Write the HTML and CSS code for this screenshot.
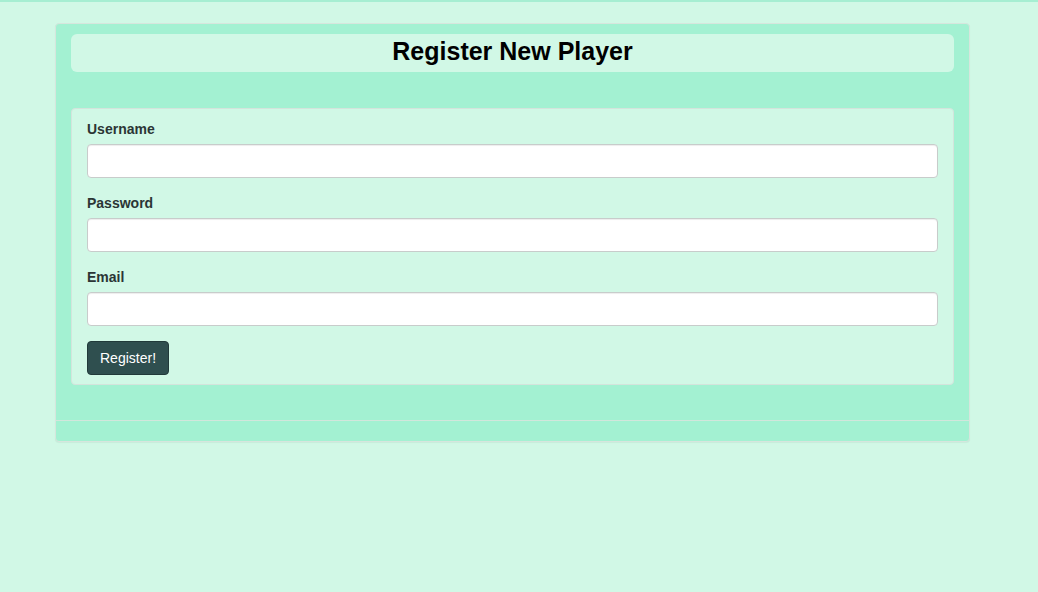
FILE: index.html
```html
<!DOCTYPE html>
<html>
<head>
<meta charset="utf-8">
<title>Register New Player</title>
<link rel="stylesheet" href="styles.css">
</head>
<body>
<div class="panel">
  <div class="panel-heading">
    <h1 class="title">Register New Player</h1>
  </div>
  <div class="panel-body">
    <form class="well">
      <div class="form-group">
        <label for="username">Username</label>
        <input id="username" type="text" class="form-control">
      </div>
      <div class="form-group">
        <label for="password">Password</label>
        <input id="password" type="password" class="form-control">
      </div>
      <div class="form-group">
        <label for="email">Email</label>
        <input id="email" type="email" class="form-control">
      </div>
      <button type="button" class="btn">Register!</button>
    </form>
  </div>
  <div class="panel-footer"></div>
</div>
</body>
</html>
```

FILE: styles.css
```css
html, body {
  margin: 0;
  padding: 0;
}
body {
  background: #d1f8e6;
  border-top: 2px solid #a6eed2;
  font-family: "Liberation Sans", Arial, Helvetica, sans-serif;
  font-size: 14px;
  line-height: 20px;
  color: #333;
  min-height: 590px;
}
.panel {
  box-sizing: border-box;
  width: 915px;
  margin: 21px 0 0 55px;
  background: #a3f1d2;
  border: 1px solid #d6e6dd;
  border-radius: 4px;
  box-shadow: 0 1px 1px rgba(0, 0, 0, 0.05);
}
.panel-heading {
  padding: 10px 15px 0;
}
.title {
  margin: 0;
  height: 38px;
  box-sizing: border-box;
  padding: 0 0 4px;
  background: #d1f8e6;
  border-radius: 6px;
  font-size: 25px;
  line-height: 34px;
  font-weight: bold;
  color: #000;
  text-align: center;
}
.panel-body {
  padding: 36px 15px 35px;
}
.well {
  margin: 0;
  padding: 10px 15px 9px;
  background: #d1f8e6;
  border: 1px solid #d4e4dc;
  border-radius: 4px;
}
.form-group {
  margin-bottom: 15px;
}
label {
  display: block;
  margin-bottom: 5px;
  font-weight: bold;
  color: #2b3535;
}
.form-control {
  display: block;
  box-sizing: border-box;
  width: 100%;
  height: 34px;
  margin: 0;
  padding: 6px 12px;
  background: #fff;
  border: 1px solid #c8cccb;
  border-radius: 4px;
  font: inherit;
  box-shadow: inset 0 1px 1px rgba(0, 0, 0, 0.075);
}
.btn {
  display: block;
  box-sizing: border-box;
  height: 34px;
  padding: 6px 12px;
  margin: 0;
  background: #2f4f4f;
  border: 1px solid #213a3a;
  border-radius: 4px;
  color: #fff;
  font: inherit;
  font-size: 14px;
  line-height: 20px;
}
.panel-footer {
  height: 20px;
  border-top: 1px solid #d2e6dc;
  border-radius: 0 0 3px 3px;
}
```
